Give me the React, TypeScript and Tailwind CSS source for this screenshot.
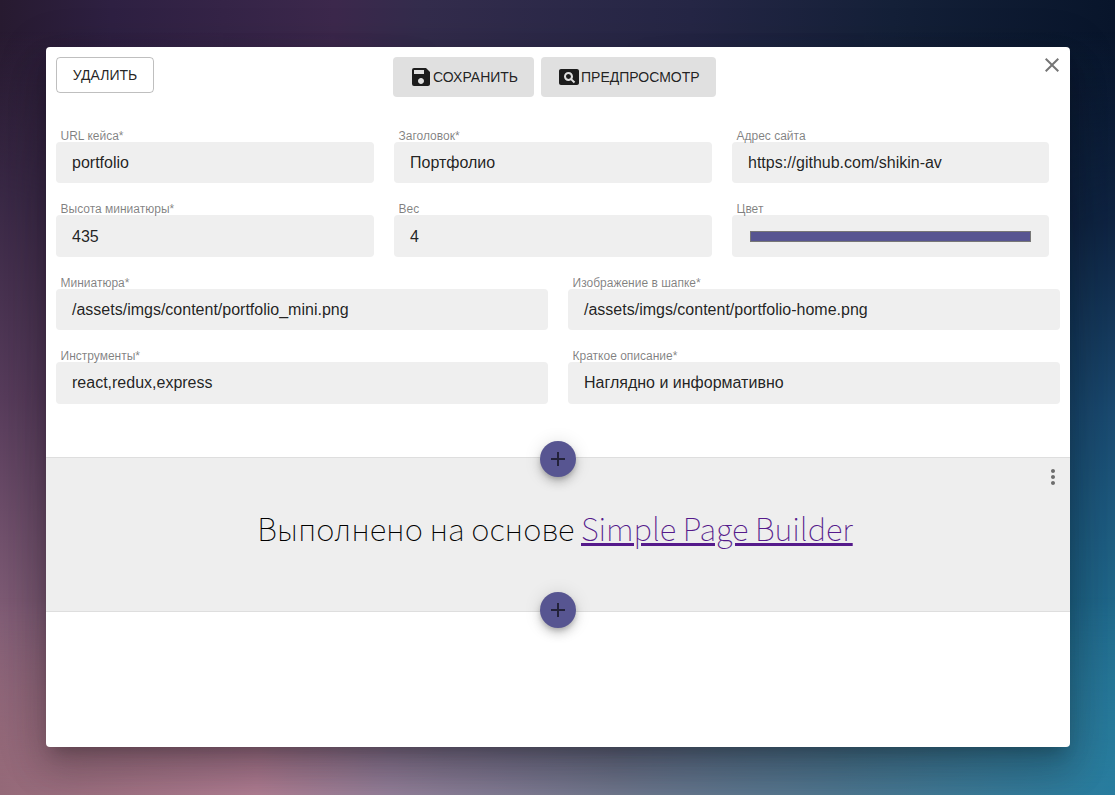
import React from "react";
import { MdAdd, MdClose, MdMoreVert, MdPageview, MdSave } from "react-icons/md";

type FieldProps = { label: string; value?: string; color?: boolean };

function Field({ label, value, color }: FieldProps) {
  return (
    <label className="block h-[73.4px] min-w-0">
      <span className="flex h-[13px] items-start whitespace-nowrap pl-[4.5px] text-[12px] leading-[14px] text-black/50">{label}</span>
      <span className="flex h-[41.4px] items-start rounded-[4px] bg-[#efefef] px-4 pt-[11.2px] text-[16px] leading-5 text-black/87">
        {color ? <span className="mx-[2px] mt-[4.4px] h-[11px] flex-1 border border-[#777] bg-[#575591]" /> : value}
      </span>
    </label>
  );
}

function Fab() {
  return (
    <button className="flex size-9 items-center justify-center rounded-full bg-[#575591] text-black/60 shadow-[0_3px_5px_-1px_rgba(0,0,0,.2),0_6px_10px_0_rgba(0,0,0,.14),0_1px_18px_0_rgba(0,0,0,.12)]">
      <MdAdd size={24} />
    </button>
  );
}

function Backdrop() {
  return (
    <div className="absolute inset-0 bg-[linear-gradient(90deg,#271a30_0%,#2e2042_10%,#3c284c_30%,#332c4c_38%,#252645_62%,#142038_80%,#08152b_100%)]">
      <div className="absolute inset-0 bg-[linear-gradient(180deg,transparent_4%,#0f2442_28%,#1a4a70_52%,#20698c_77%,#2b7d9c_100%)] [mask-image:linear-gradient(90deg,transparent_55%,black_100%)]" />
      <div className="absolute inset-0 bg-[linear-gradient(180deg,transparent_4%,#3a2946_25%,#573c5b_50%,#805d76_78%,#966a7c_100%)] [mask-image:linear-gradient(90deg,black_0%,transparent_40%)]" />
      <div className="absolute inset-0 bg-[linear-gradient(90deg,#946978_0%,#b07d92_23%,#94809a_35%,#70778d_55%,#4f7790_75%,#277c9e_100%)] [mask-image:linear-gradient(180deg,transparent_75%,black_100%)]" />
    </div>
  );
}

export default function App() {
  return (
    <div className="relative h-[795px] w-[1115px] overflow-hidden pl-[46px] pt-[47px] font-['Liberation_Sans',Arial,sans-serif]">
      <Backdrop />
      <main className="relative h-[700px] w-[1024px] rounded-[4px] bg-white shadow-[0_11px_15px_-7px_rgba(0,0,0,.2),0_24px_38px_3px_rgba(0,0,0,.14),0_9px_46px_8px_rgba(0,0,0,.12)]">
        <header className="grid h-[82px] grid-cols-[337px_1fr_24px] items-start pl-[10px] pr-[6px] pt-[10px] text-[14px] text-black/87">
          <button className="h-9 w-[98px] rounded-[4px] border border-black/25">УДАЛИТЬ</button>
          <div className="flex gap-[7px]">
            <button className="flex h-10 w-[141px] items-center rounded-[4px] bg-[#e0e0e0] pl-4"><MdSave size={24} />СОХРАНИТЬ</button>
            <button className="flex h-10 w-[175px] items-center rounded-[4px] bg-[#e0e0e0] pl-4"><MdPageview size={24} />ПРЕДПРОСМОТР</button>
          </div>
          <button className="-mt-1 text-black/54"><MdClose size={24} /></button>
        </header>
        <form className="h-[328px] px-[10px]">
          <div className="grid grid-cols-[318px_318px_317.3px] gap-x-5">
            <Field label="URL кейса*" value="portfolio" />
            <Field label="Заголовок*" value="Портфолио" />
            <Field label="Адрес сайта" value="https://github.com/shikin-av" />
            <Field label="Высота миниатюры*" value="435" />
            <Field label="Вес" value="4" />
            <Field label="Цвет" color />
          </div>
          <div className="grid grid-cols-2 gap-x-5">
            <Field label="Миниатюра*" value="/assets/imgs/content/portfolio_mini.png" />
            <Field label="Изображение в шапке*" value="/assets/imgs/content/portfolio-home.png" />
            <Field label="Инструменты*" value="react,redux,express" />
            <Field label="Краткое описание*" value="Наглядно и информативно" />
          </div>
        </form>
        <section className="relative flex h-[155px] items-center justify-center border-y border-[#dedede] bg-[#eee]">
          <h1 className="-ml-[6px] -mt-[12px] whitespace-nowrap font-['Noto_Sans_CJK_SC',sans-serif] text-[31px] font-thin tracking-[-0.08px] text-black">
            Выполнено на основе <a className="text-[#551a8b] underline decoration-[3px] underline-offset-[2px]">Simple Page Builder</a>
          </h1>
          <div className="absolute left-[494px] top-[-17px]"><Fab /></div>
          <div className="absolute left-[494px] top-[134px]"><Fab /></div>
          <button className="absolute right-[5px] top-[7px] text-black/54"><MdMoreVert size={24} /></button>
        </section>
      </main>
    </div>
  );
}
